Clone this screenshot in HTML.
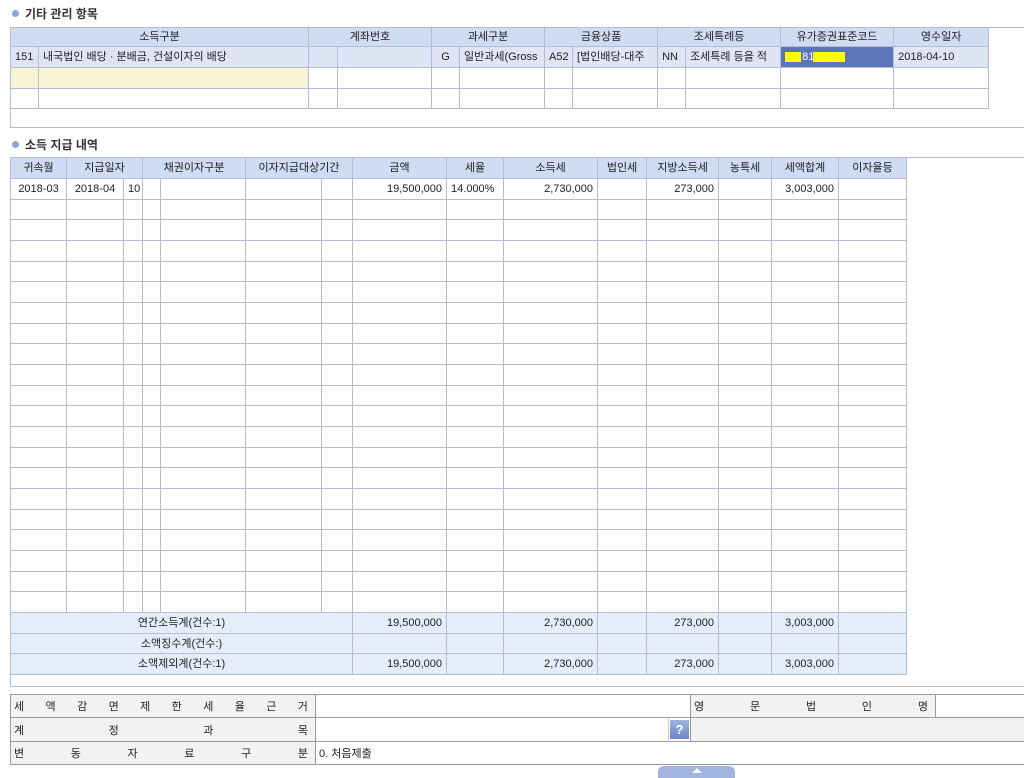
<!DOCTYPE html>
<html><head><meta charset="utf-8"><style>
*{margin:0;padding:0;box-sizing:border-box}
body{width:1024px;height:776px;overflow:hidden;background:#fff;font-family:"Liberation Sans","Noto Sans CJK KR","NanumGothic",sans-serif;font-size:11px;color:#222;position:relative}
.t{position:absolute;left:10px;border-collapse:collapse;table-layout:fixed}
.t td{border:1px solid #b4bcd6;height:21px;padding:0 4px;white-space:nowrap;overflow:hidden;font-size:11px;line-height:12px}
.t tr.n td{height:20px}
.t tr.hh td{height:19px}
.h td{background:#cfdcf3;text-align:center}
.r{text-align:right}.c{text-align:center}
.title{position:absolute;left:12px;font-weight:bold;font-size:12px;color:#333}
.title:before{content:"";display:inline-block;width:7px;height:7px;border-radius:50%;background:#8da6d6;margin-right:6px;vertical-align:1px}
.hl{position:absolute;height:1px;background:#b4bcd6}
.vl{position:absolute;width:1px;background:#b4bcd6}
.s td{background:#e4edfa}
.f{position:absolute;left:10px;border-collapse:collapse;table-layout:fixed}
.f td{border:1px solid #9a9a9a;height:23px;font-size:11px;padding:0 3px}
.lb{background:#f2f2f2}
.sp{display:flex;justify-content:space-between;padding-right:4px!important}
</style></head><body>
<div class="title" style="top:5px">기타 관리 항목</div>
<div class="hl" style="left:10px;top:27px;width:1014px"></div>
<div class="vl" style="left:10px;top:27px;height:101px"></div>
<div class="hl" style="left:10px;top:127px;width:1014px"></div>
<table class="t" style="top:27px;width:978px">
<colgroup><col style="width:28px"><col style="width:270px"><col style="width:29px"><col style="width:94px"><col style="width:28px"><col style="width:85px"><col style="width:28px"><col style="width:85px"><col style="width:28px"><col style="width:95px"><col style="width:113px"><col style="width:95px"></colgroup>
<tr class="h hh"><td colspan="2">소득구분</td><td colspan="2">계좌번호</td><td colspan="2">과세구분</td><td colspan="2">금융상품</td><td colspan="2">조세특례등</td><td>유가증권표준코드</td><td>영수일자</td></tr>
<tr style="background:#dfe5f4"><td>151</td><td>내국법인 배당 · 분배금, 건설이자의 배당</td><td></td><td></td><td class="c">G</td><td>일반과세(Gross</td><td>A52</td><td>[법인배당-대주</td><td>NN</td><td>조세특례 등을 적</td><td style="background:#5a75b8;position:relative"><span style="position:absolute;left:4px;top:5px;width:16px;height:10px;background:#ff0"></span><span style="position:absolute;left:21px;top:4px;color:#fff">81</span><span style="position:absolute;left:32px;top:5px;width:32px;height:10px;background:#ff0"></span></td><td>2018-04-10</td></tr>
<tr><td style="background:#faf3d6"></td><td style="background:#faf3d6"></td><td></td><td></td><td></td><td></td><td></td><td></td><td></td><td></td><td></td><td></td></tr>
<tr class="n"><td></td><td></td><td></td><td></td><td></td><td></td><td></td><td></td><td></td><td></td><td></td><td></td></tr>
</table>

<div class="title" style="top:136px">소득 지급 내역</div>
<div class="hl" style="left:10px;top:157px;width:1014px"></div>
<div class="vl" style="left:10px;top:157px;height:530px"></div>
<div class="hl" style="left:10px;top:686px;width:1014px"></div>
<table class="t" style="top:157px;width:896px">
<colgroup><col style="width:56px"><col style="width:57px"><col style="width:19px"><col style="width:18px"><col style="width:85px"><col style="width:76px"><col style="width:31px"><col style="width:94px"><col style="width:57px"><col style="width:94px"><col style="width:49px"><col style="width:72px"><col style="width:53px"><col style="width:67px"><col style="width:68px"></colgroup>
<tr class="h"><td>귀속월</td><td colspan="2">지급일자</td><td colspan="2">채권이자구분</td><td colspan="2">이자지급대상기간</td><td>금액</td><td>세율</td><td>소득세</td><td>법인세</td><td>지방소득세</td><td>농특세</td><td>세액합계</td><td>이자율등</td></tr>
<tr><td class="c">2018-03</td><td class="c">2018-04</td><td>10</td><td></td><td></td><td></td><td></td><td class="r">19,500,000</td><td>14.000%</td><td class="r">2,730,000</td><td></td><td class="r">273,000</td><td></td><td class="r">3,003,000</td><td></td></tr>
<tr class="n"><td></td><td></td><td></td><td></td><td></td><td></td><td></td><td></td><td></td><td></td><td></td><td></td><td></td><td></td><td></td></tr>
<tr><td></td><td></td><td></td><td></td><td></td><td></td><td></td><td></td><td></td><td></td><td></td><td></td><td></td><td></td><td></td></tr>
<tr><td></td><td></td><td></td><td></td><td></td><td></td><td></td><td></td><td></td><td></td><td></td><td></td><td></td><td></td><td></td></tr>
<tr class="n"><td></td><td></td><td></td><td></td><td></td><td></td><td></td><td></td><td></td><td></td><td></td><td></td><td></td><td></td><td></td></tr>
<tr><td></td><td></td><td></td><td></td><td></td><td></td><td></td><td></td><td></td><td></td><td></td><td></td><td></td><td></td><td></td></tr>
<tr><td></td><td></td><td></td><td></td><td></td><td></td><td></td><td></td><td></td><td></td><td></td><td></td><td></td><td></td><td></td></tr>
<tr class="n"><td></td><td></td><td></td><td></td><td></td><td></td><td></td><td></td><td></td><td></td><td></td><td></td><td></td><td></td><td></td></tr>
<tr><td></td><td></td><td></td><td></td><td></td><td></td><td></td><td></td><td></td><td></td><td></td><td></td><td></td><td></td><td></td></tr>
<tr><td></td><td></td><td></td><td></td><td></td><td></td><td></td><td></td><td></td><td></td><td></td><td></td><td></td><td></td><td></td></tr>
<tr class="n"><td></td><td></td><td></td><td></td><td></td><td></td><td></td><td></td><td></td><td></td><td></td><td></td><td></td><td></td><td></td></tr>
<tr><td></td><td></td><td></td><td></td><td></td><td></td><td></td><td></td><td></td><td></td><td></td><td></td><td></td><td></td><td></td></tr>
<tr><td></td><td></td><td></td><td></td><td></td><td></td><td></td><td></td><td></td><td></td><td></td><td></td><td></td><td></td><td></td></tr>
<tr class="n"><td></td><td></td><td></td><td></td><td></td><td></td><td></td><td></td><td></td><td></td><td></td><td></td><td></td><td></td><td></td></tr>
<tr><td></td><td></td><td></td><td></td><td></td><td></td><td></td><td></td><td></td><td></td><td></td><td></td><td></td><td></td><td></td></tr>
<tr><td></td><td></td><td></td><td></td><td></td><td></td><td></td><td></td><td></td><td></td><td></td><td></td><td></td><td></td><td></td></tr>
<tr class="n"><td></td><td></td><td></td><td></td><td></td><td></td><td></td><td></td><td></td><td></td><td></td><td></td><td></td><td></td><td></td></tr>
<tr><td></td><td></td><td></td><td></td><td></td><td></td><td></td><td></td><td></td><td></td><td></td><td></td><td></td><td></td><td></td></tr>
<tr><td></td><td></td><td></td><td></td><td></td><td></td><td></td><td></td><td></td><td></td><td></td><td></td><td></td><td></td><td></td></tr>
<tr class="n"><td></td><td></td><td></td><td></td><td></td><td></td><td></td><td></td><td></td><td></td><td></td><td></td><td></td><td></td><td></td></tr>
<tr><td></td><td></td><td></td><td></td><td></td><td></td><td></td><td></td><td></td><td></td><td></td><td></td><td></td><td></td><td></td></tr>
<tr class="s"><td colspan="7" class="c">연간소득계(건수:1)</td><td class="r">19,500,000</td><td></td><td class="r">2,730,000</td><td></td><td class="r">273,000</td><td></td><td class="r">3,003,000</td><td></td></tr>
<tr class="s n"><td colspan="7" class="c">소액징수계(건수:)</td><td></td><td></td><td></td><td></td><td></td><td></td><td></td><td></td></tr>
<tr class="s"><td colspan="7" class="c">소액제외계(건수:1)</td><td class="r">19,500,000</td><td></td><td class="r">2,730,000</td><td></td><td class="r">273,000</td><td></td><td class="r">3,003,000</td><td></td></tr>
</table>

<table class="f" style="top:694px;width:1020px">
<colgroup><col style="width:305px"><col style="width:353px"><col style="width:22px"><col style="width:245px"><col style="width:95px"></colgroup>
<tr><td class="lb" style="height:22px"><div class="sp"><span>세</span><span>액</span><span>감</span><span>면</span><span>제</span><span>한</span><span>세</span><span>율</span><span>근</span><span>거</span></div></td><td colspan="2"></td><td class="lb"><div class="sp"><span>영</span><span>문</span><span>법</span><span>인</span><span>명</span></div></td><td></td></tr>
<tr><td class="lb" style="height:24px"><div class="sp"><span>계</span><span>정</span><span>과</span><span>목</span></div></td><td style="border-right:none"></td><td style="padding:1px;border-left:1px solid #ccc"><div style="width:19px;height:19px;background:linear-gradient(#9fb2e0,#6d86c9);color:#fff;font-weight:bold;text-align:center;line-height:19px;font-size:13px">?</div></td><td class="lb" colspan="2"></td></tr>
<tr><td class="lb" style="height:22px"><div class="sp"><span>변</span><span>동</span><span>자</span><span>료</span><span>구</span><span>분</span></div></td><td colspan="4">0. 처음제출</td></tr>
</table>
<div style="position:absolute;left:658px;top:766px;width:77px;height:12px;background:#a3b4e0;border-radius:6px 6px 0 0"></div>
<div style="position:absolute;left:692px;top:768px;width:0;height:0;border-left:5px solid transparent;border-right:5px solid transparent;border-bottom:5px solid #fff"></div>
</body></html>
